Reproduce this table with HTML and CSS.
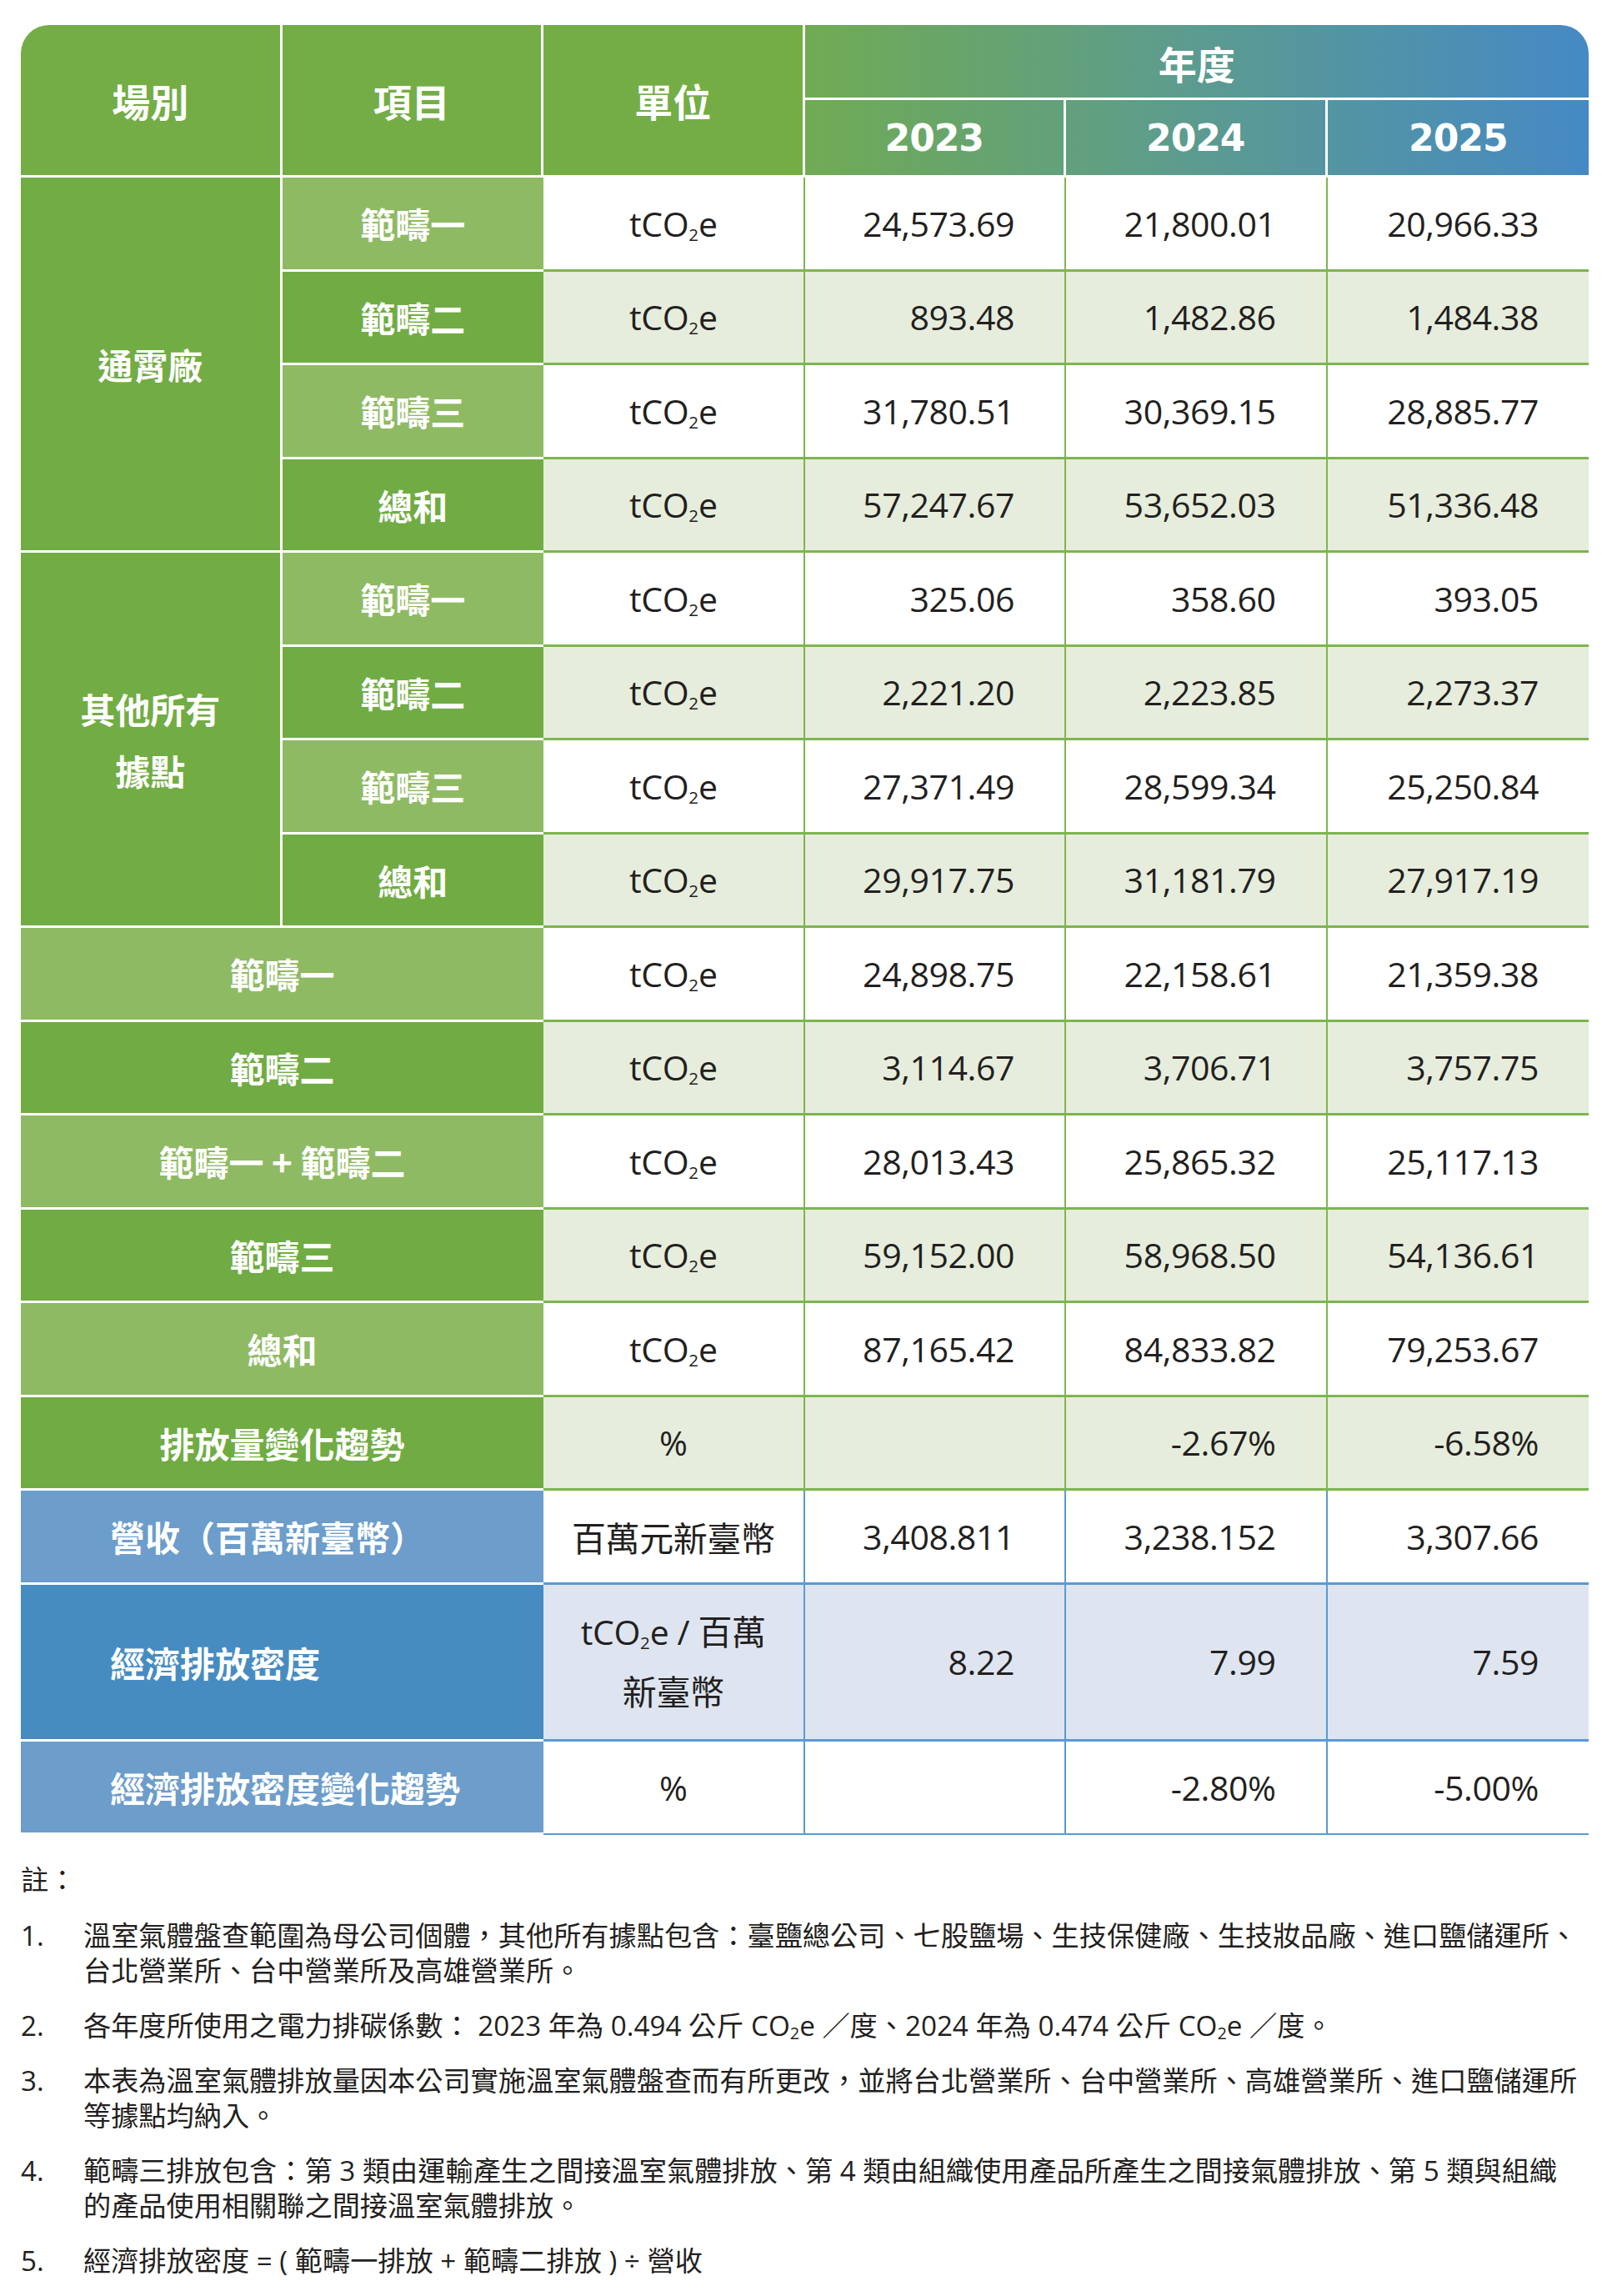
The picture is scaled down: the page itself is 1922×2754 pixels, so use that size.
FILE: index.html
```html
<!DOCTYPE html>
<html lang="zh-Hant">
<head>
<meta charset="utf-8">
<title>溫室氣體排放量</title>
<link rel="stylesheet" href="styles.css">
</head>
<body>
<div class="page">
  <table class="ghg">
    <colgroup>
      <col class="c"><col class="c"><col class="c"><col class="c"><col class="c"><col class="c">
    </colgroup>
    <thead>
      <tr class="h1">
        <th class="hd tl" rowspan="2">場別</th>
        <th class="hd" rowspan="2">項目</th>
        <th class="hd" rowspan="2">單位</th>
        <th class="hd year-group" colspan="3">年度</th>
      </tr>
      <tr class="h2">
        <th class="hd yr y1">2023</th>
        <th class="hd yr y2">2024</th>
        <th class="hd yr y3 last">2025</th>
      </tr>
    </thead>
    <tbody>
      <tr class="r">
        <td class="site" rowspan="4">通霄廠</td>
        <td class="lbl light">範疇一</td>
        <td class="unit">tCO<span class="sub">2</span>e</td>
        <td class="num">24,573.69</td><td class="num">21,800.01</td><td class="num last">20,966.33</td>
      </tr>
      <tr class="r alt">
        <td class="lbl dark">範疇二</td>
        <td class="unit">tCO<span class="sub">2</span>e</td>
        <td class="num">893.48</td><td class="num">1,482.86</td><td class="num last">1,484.38</td>
      </tr>
      <tr class="r">
        <td class="lbl light">範疇三</td>
        <td class="unit">tCO<span class="sub">2</span>e</td>
        <td class="num">31,780.51</td><td class="num">30,369.15</td><td class="num last">28,885.77</td>
      </tr>
      <tr class="r alt">
        <td class="lbl dark">總和</td>
        <td class="unit">tCO<span class="sub">2</span>e</td>
        <td class="num">57,247.67</td><td class="num">53,652.03</td><td class="num last">51,336.48</td>
      </tr>
      <tr class="r">
        <td class="site two" rowspan="4">其他所有<br>據點</td>
        <td class="lbl light">範疇一</td>
        <td class="unit">tCO<span class="sub">2</span>e</td>
        <td class="num">325.06</td><td class="num">358.60</td><td class="num last">393.05</td>
      </tr>
      <tr class="r alt">
        <td class="lbl dark">範疇二</td>
        <td class="unit">tCO<span class="sub">2</span>e</td>
        <td class="num">2,221.20</td><td class="num">2,223.85</td><td class="num last">2,273.37</td>
      </tr>
      <tr class="r">
        <td class="lbl light">範疇三</td>
        <td class="unit">tCO<span class="sub">2</span>e</td>
        <td class="num">27,371.49</td><td class="num">28,599.34</td><td class="num last">25,250.84</td>
      </tr>
      <tr class="r alt">
        <td class="lbl dark">總和</td>
        <td class="unit">tCO<span class="sub">2</span>e</td>
        <td class="num">29,917.75</td><td class="num">31,181.79</td><td class="num last">27,917.19</td>
      </tr>
      <tr class="r">
        <td class="lbl light" colspan="2">範疇一</td>
        <td class="unit">tCO<span class="sub">2</span>e</td>
        <td class="num">24,898.75</td><td class="num">22,158.61</td><td class="num last">21,359.38</td>
      </tr>
      <tr class="r alt">
        <td class="lbl dark" colspan="2">範疇二</td>
        <td class="unit">tCO<span class="sub">2</span>e</td>
        <td class="num">3,114.67</td><td class="num">3,706.71</td><td class="num last">3,757.75</td>
      </tr>
      <tr class="r">
        <td class="lbl light" colspan="2">範疇一 + 範疇二</td>
        <td class="unit">tCO<span class="sub">2</span>e</td>
        <td class="num">28,013.43</td><td class="num">25,865.32</td><td class="num last">25,117.13</td>
      </tr>
      <tr class="r alt">
        <td class="lbl dark" colspan="2">範疇三</td>
        <td class="unit">tCO<span class="sub">2</span>e</td>
        <td class="num">59,152.00</td><td class="num">58,968.50</td><td class="num last">54,136.61</td>
      </tr>
      <tr class="r">
        <td class="lbl light" colspan="2">總和</td>
        <td class="unit">tCO<span class="sub">2</span>e</td>
        <td class="num">87,165.42</td><td class="num">84,833.82</td><td class="num last">79,253.67</td>
      </tr>
      <tr class="r alt">
        <td class="lbl dark" colspan="2">排放量變化趨勢</td>
        <td class="unit">%</td>
        <td class="num"></td><td class="num">-2.67%</td><td class="num last">-6.58%</td>
      </tr>
      <tr class="r blue">
        <td class="lbl blue-light left" colspan="2">營收（百萬新臺幣）</td>
        <td class="unit">百萬元新臺幣</td>
        <td class="num">3,408.811</td><td class="num">3,238.152</td><td class="num last">3,307.66</td>
      </tr>
      <tr class="r blue tall balt">
        <td class="lbl blue-dark left" colspan="2">經濟排放密度</td>
        <td class="unit multi">tCO<span class="sub">2</span>e / 百萬<br>新臺幣</td>
        <td class="num">8.22</td><td class="num">7.99</td><td class="num last">7.59</td>
      </tr>
      <tr class="r blue end">
        <td class="lbl blue-light left" colspan="2">經濟排放密度變化趨勢</td>
        <td class="unit">%</td>
        <td class="num"></td><td class="num">-2.80%</td><td class="num last">-5.00%</td>
      </tr>
    </tbody>
  </table>

  <section class="notes">
    <div class="note-title">註：</div>
    <div class="note">
      <span class="n">1.</span>
      <p class="t">溫室氣體盤查範圍為母公司個體，其他所有據點包含：臺鹽總公司、七股鹽場、生技保健廠、生技妝品廠、進口鹽儲運所、<br>台北營業所、台中營業所及高雄營業所。</p>
    </div>
    <div class="note">
      <span class="n">2.</span>
      <p class="t">各年度所使用之電力排碳係數： 2023 年為 0.494 公斤 CO<span class="sub">2</span>e ／度、2024 年為 0.474 公斤 CO<span class="sub">2</span>e ／度。</p>
    </div>
    <div class="note">
      <span class="n">3.</span>
      <p class="t">本表為溫室氣體排放量因本公司實施溫室氣體盤查而有所更改，並將台北營業所、台中營業所、高雄營業所、進口鹽儲運所<br>等據點均納入。</p>
    </div>
    <div class="note">
      <span class="n">4.</span>
      <p class="t">範疇三排放包含：第 3 類由運輸產生之間接溫室氣體排放、第 4 類由組織使用產品所產生之間接氣體排放、第 5 類與組織<br>的產品使用相關聯之間接溫室氣體排放。</p>
    </div>
    <div class="note">
      <span class="n">5.</span>
      <p class="t">經濟排放密度 = ( 範疇一排放 + 範疇二排放 ) ÷ 營收</p>
    </div>
  </section>
</div>
</body>
</html>
```

FILE: styles.css
```css
html, body {
  margin: 0;
  padding: 0;
  background: #ffffff;
}

body {
  font-family: "Open Sans", "Noto Sans CJK TC", sans-serif;
  color: #231f20;
}

.page {
  padding: 30px 0 0 25px;
  width: 1881px;
}

.ghg {
  width: 1881px;
  table-layout: fixed;
  border-collapse: separate;
  border-spacing: 0;
}

.ghg .c {
  width: 313.5px;
}

.ghg th,
.ghg td {
  padding: 0;
  box-sizing: border-box;
}

/* ---------- header ---------- */
.ghg .hd {
  color: #ffffff;
  background: #74ad46;
  font-family: "Noto Sans CJK TC", sans-serif;
  font-weight: 700;
  font-size: 46px;
  text-align: center;
  vertical-align: middle;
  border-right: 3px solid #ffffff;
  border-bottom: 3px solid #ffffff;
}

.h1 { height: 90px; }
.h2 { height: 93px; }

.ghg .tl {
  border-top-left-radius: 34px;
}

.ghg .year-group {
  border-right: 0;
  border-top-right-radius: 34px;
  background: linear-gradient(90deg, #70ab53 0%, #5e9d8a 45%, #4589c5 100%);
  padding-top: 2px;
}

.ghg .yr {
  font-family: "DejaVu Sans", sans-serif;
  font-weight: 700;
  font-size: 44px;
  letter-spacing: -1px;
  background-image: linear-gradient(90deg, #70ab53 0%, #5e9d8a 45%, #4589c5 100%);
  background-size: 300% 100%;
  background-repeat: no-repeat;
}

.ghg .y1 { background-position: 0% 0; }
.ghg .y2 { background-position: 50% 0; }
.ghg .y3 { background-position: 100% 0; border-right: 0; }

/* ---------- body rows ---------- */
.r { height: 112.5px; }
.r.tall { height: 188px; }

.ghg .site {
  background: #72ac44;
  color: #ffffff;
  font-family: "Noto Sans CJK TC", sans-serif;
  font-weight: 700;
  font-size: 42px;
  line-height: 74px;
  text-align: center;
  vertical-align: middle;
  border-right: 3px solid #ffffff;
  border-bottom: 3px solid #ffffff;
}

.ghg .lbl {
  color: #ffffff;
  font-family: "Noto Sans CJK TC", sans-serif;
  font-weight: 700;
  font-size: 42px;
  text-align: center;
  vertical-align: middle;
  border-bottom: 3px solid #ffffff;
}

.ghg .lbl.light { background: #8fba64; }
.ghg .lbl.dark { background: #70ac43; }
.ghg .lbl.blue-light { background: #6c9dcb; }
.ghg .lbl.blue-dark { background: #478cc1; }

.ghg .lbl.left {
  text-align: left;
  padding-left: 107px;
}

.ghg .unit,
.ghg .num {
  font-size: 41px;
  letter-spacing: -0.4px;
  color: #231f20;
  vertical-align: middle;
  border-right: 2px solid #7db54f;
  border-bottom: 3px solid #7db54f;
  background: #ffffff;
}

.ghg .unit {
  text-align: center;
  font-family: "Open Sans", "Noto Sans CJK TC", sans-serif;
}

.ghg .unit.multi {
  line-height: 72px;
}

.ghg .num {
  text-align: right;
  padding-right: 60px;
}

.ghg .num.last {
  border-right: 0;
}

.ghg .r.alt .unit,
.ghg .r.alt .num {
  background: #e6eddc;
}

.ghg .r.blue .unit,
.ghg .r.blue .num {
  border-right-color: #5b9ad3;
  border-bottom-color: #5b9ad3;
}

.ghg .r.blue .num.last {
  border-right: 0;
}

.ghg .r.balt .unit,
.ghg .r.balt .num {
  background: #dee5f1;
}

.ghg .r.end .unit,
.ghg .r.end .num {
  border-bottom-width: 2px;
}

.sub {
  font-size: 0.5em;
  vertical-align: -0.22em;
  line-height: 0;
  letter-spacing: 0;
}

/* ---------- notes ---------- */
.notes {
  margin-top: 33px;
  font-family: "Open Sans", "Noto Sans CJK TC", sans-serif;
  font-size: 33.2px;
  line-height: 42px;
  color: #231f20;
}

.note-title {
  margin-bottom: 25px;
}

.note {
  display: flex;
  margin-bottom: 24px;
}

.note .n {
  flex: 0 0 75px;
}

.note .t {
  margin: 0;
  white-space: nowrap;
}

.notes .sub {
  font-size: 0.6em;
  vertical-align: -0.2em;
}
```
